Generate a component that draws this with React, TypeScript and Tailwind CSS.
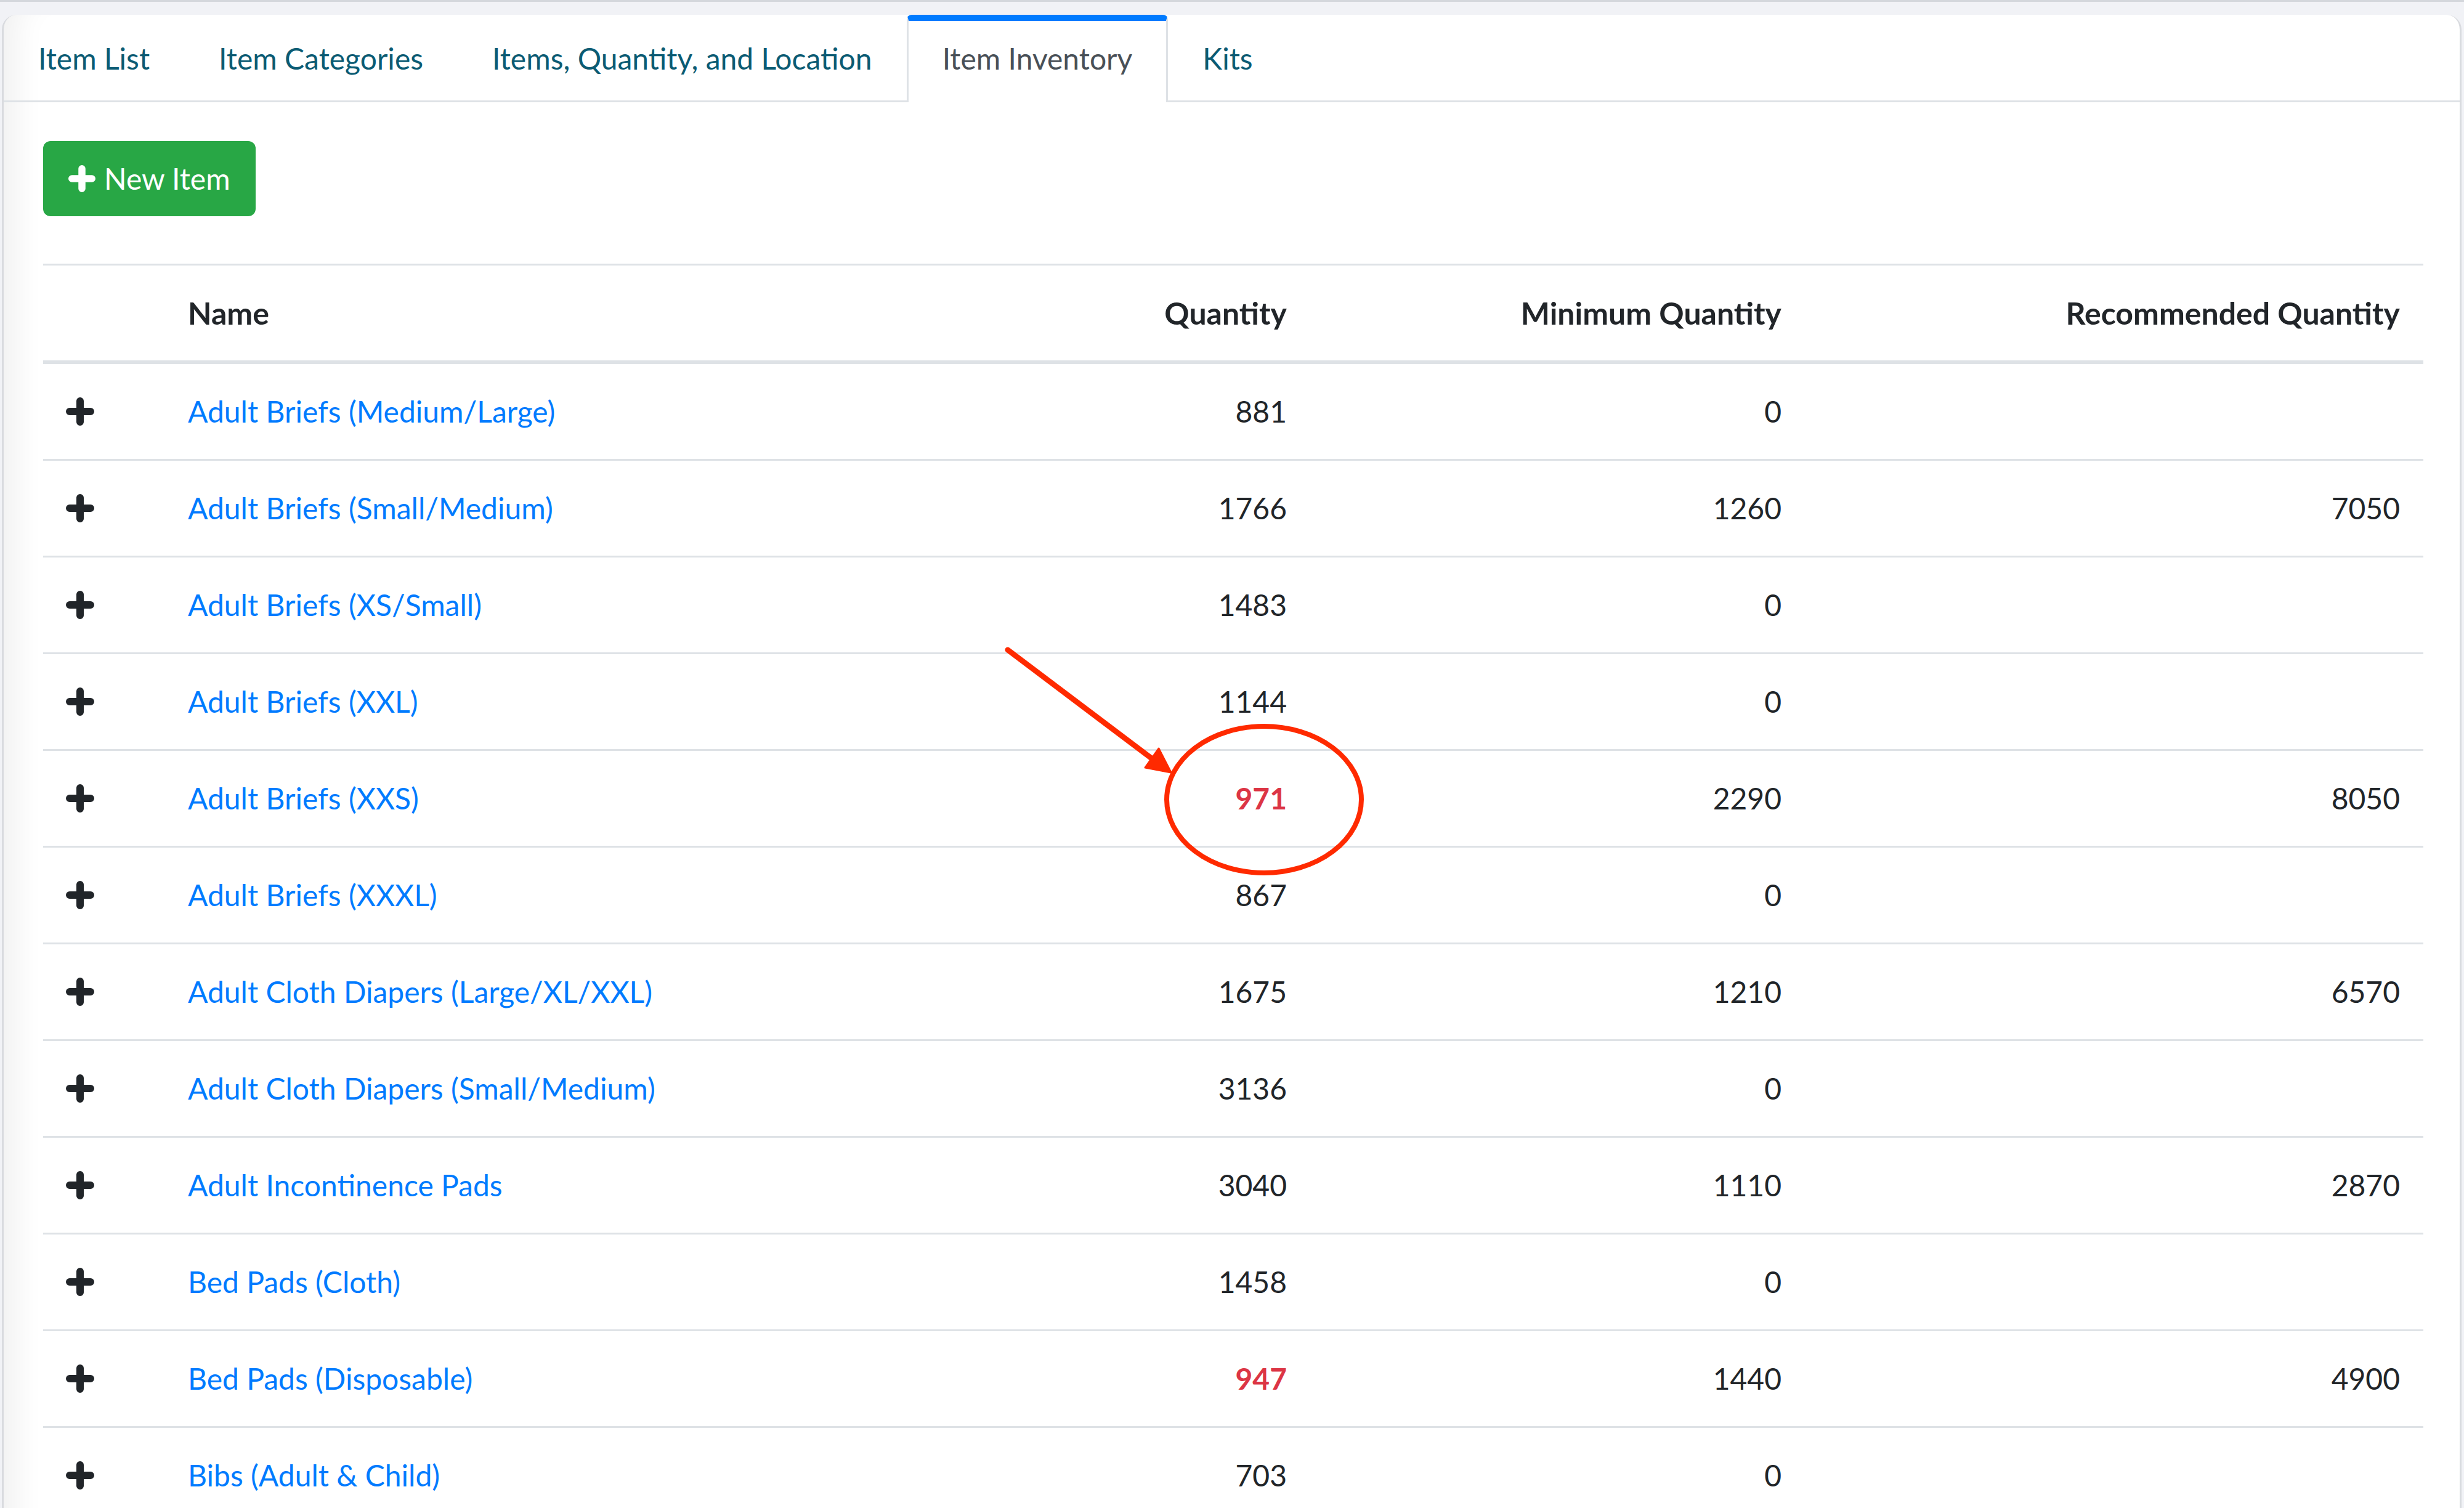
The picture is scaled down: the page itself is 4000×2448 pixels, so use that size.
import React from 'react';

type Row = {
    name: string;
    qty: number;
    low?: boolean;
    min: number;
    rec?: number;
};

const rows: Row[] = [
    { name: 'Adult Briefs (Medium/Large)', qty: 881, min: 0 },
    { name: 'Adult Briefs (Small/Medium)', qty: 1766, min: 1260, rec: 7050 },
    { name: 'Adult Briefs (XS/Small)', qty: 1483, min: 0 },
    { name: 'Adult Briefs (XXL)', qty: 1144, min: 0 },
    { name: 'Adult Briefs (XXS)', qty: 971, low: true, min: 2290, rec: 8050 },
    { name: 'Adult Briefs (XXXL)', qty: 867, min: 0 },
    { name: 'Adult Cloth Diapers (Large/XL/XXL)', qty: 1675, min: 1210, rec: 6570 },
    { name: 'Adult Cloth Diapers (Small/Medium)', qty: 3136, min: 0 },
    { name: 'Adult Incontinence Pads', qty: 3040, min: 1110, rec: 2870 },
    { name: 'Bed Pads (Cloth)', qty: 1458, min: 0 },
    { name: 'Bed Pads (Disposable)', qty: 947, low: true, min: 1440, rec: 4900 },
    { name: 'Bibs (Adult & Child)', qty: 703, min: 0 },
];

const tabs = ['Item List', 'Item Categories', 'Items, Quantity, and Location', 'Item Inventory', 'Kits'];

function Plus({ className }: { className?: string }) {
    return (
        <svg viewBox="0 0 46 46" className={className} fill="none" stroke="currentColor" strokeWidth={12} strokeLinecap="round">
            <path d="M23 6v34M6 23h34" />
        </svg>
    );
}

const cols = 'grid grid-cols-[197px_1300px_560px_803px_1004px]';

export default function App() {
    return (
        <div
            className="relative w-[4000px] h-[2448px] overflow-hidden bg-[#f1f2f6] border-t-[3px] border-[#d4d7dc] text-[#212529] text-[48px] leading-[76.8px]"
            style={{ fontFamily: 'Lato, "Open Sans", sans-serif' }}
        >
            <div className="mt-[21px] ml-[3px] w-[3993px] h-[2500px] bg-white rounded-t-[24px] border-x-[3px] border-[#d9dbdf] shadow-[inset_60px_0_50px_-40px_rgba(0,0,0,0.06)]">
                {/* tabs */}
                <div className="flex h-[142px] border-b-[3px] border-[#dee2e6]">
                    {tabs.map((t) =>
                        t === 'Item Inventory' ? (
                            <div
                                key={t}
                                className="-mb-[3px] px-[55px] pt-[23px] bg-white text-[#495057] border-t-[10px] border-t-[#007bff] border-x-[3px] border-x-[#dee2e6] rounded-t-[8px]"
                            >
                                {t}
                            </div>
                        ) : (
                            <div key={t} className="px-[56px] pt-[33px] text-[#0b5b73]">
                                {t}
                            </div>
                        ),
                    )}
                </div>

                <div className="pl-[64px] pt-[63px]">
                    <button className="flex items-center gap-[14px] h-[122px] px-[41px] bg-[#28a745] text-white rounded-[12px]">
                        <Plus className="w-[44px] h-[44px]" />
                        <span>New Item</span>
                    </button>

                    <div className="mt-[77px] w-[3864px] border-t-[3px] border-[#dee2e6]">
                        <div className={`${cols} h-[160px] items-center font-bold text-[50px] border-b-[6px] border-[#dee2e6]`}>
                            <div />
                            <div className="px-[38px]">Name</div>
                            <div className="px-[38px] text-right">Quantity</div>
                            <div className="px-[38px] text-right">Minimum Quantity</div>
                            <div className="px-[38px] text-right">Recommended Quantity</div>
                        </div>
                        {rows.map((r) => (
                            <div key={r.name} className={`${cols} h-[157px] items-center border-b-[3px] border-[#dee2e6]`}>
                                <div className="pl-[37px]">
                                    <Plus className="w-[46px] h-[46px] text-[#212529]" />
                                </div>
                                <div className="px-[38px] text-[#007bff]">{r.name}</div>
                                <div className={`px-[38px] text-right ${r.low ? 'text-[#dc3545] font-bold' : ''}`}>{r.qty}</div>
                                <div className="px-[38px] text-right">{r.min}</div>
                                <div className="px-[38px] text-right">{r.rec ?? ''}</div>
                            </div>
                        ))}
                    </div>
                </div>
            </div>

            {/* annotation */}
            <svg className="absolute left-0 top-0 pointer-events-none" width={4000} height={2448}>
                <line x1={1636} y1={1052} x2={1872} y2={1230} stroke="#ff2a00" strokeWidth={9} strokeLinecap="round" />
                <polygon points="1881,1212 1859,1243 1901,1251" fill="#ff2a00" stroke="#ff2a00" strokeWidth={3} strokeLinejoin="round" />
                <ellipse cx={2052} cy={1295} rx={158} ry={119} fill="none" stroke="#ff2a00" strokeWidth={8} />
            </svg>
        </div>
    );
}
